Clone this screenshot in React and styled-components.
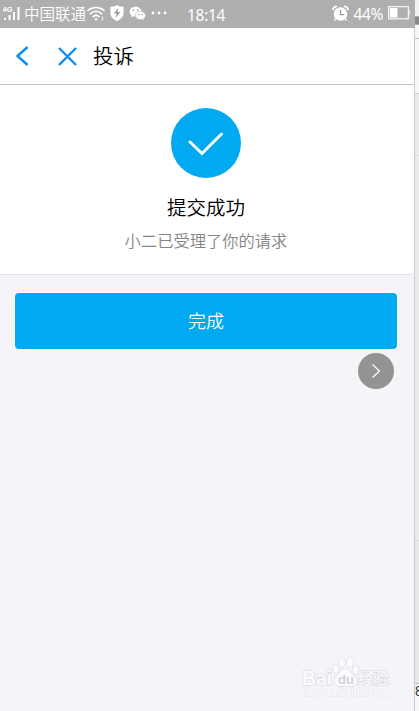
import React from 'react'
import styled, { createGlobalStyle } from 'styled-components'

const GlobalStyle = createGlobalStyle`
  * {
    box-sizing: border-box;
  }

  body {
    margin: 0;
    overflow: hidden;
    font-family: "Noto Sans CJK SC", "Noto Sans", sans-serif;
  }
`

const Window = styled.div`
  display: flex;
  width: 419px;
  height: 711px;
  overflow: hidden;
`

const Phone = styled.div`
  position: relative;
  display: flex;
  flex-direction: column;
  width: 415px;
  background: #f4f4f9;
  border-right: 1px solid #cbcbcd;
`

const StatusBar = styled.header`
  display: flex;
  align-items: center;
  flex: none;
  width: 415px;
  height: 28px;
  padding: 0 4px 2px 3px;
  background: #afafaf;
  color: #fff;

  svg {
    flex: none;
    display: block;
  }
`

const Carrier = styled.span`
  width: 62px;
  margin: 0 1px 0 3px;
  font-size: 15.5px;
  font-weight: 350;
  line-height: 26px;
  white-space: nowrap;
`

const Notices = styled.div`
  display: flex;
  align-items: center;
  gap: 4px;
`

const Clock = styled.span`
  margin-left: 20px;
  padding-top: 3px;
  font-family: "Noto Sans", sans-serif;
  font-size: 15.5px;
  line-height: 24px;
  letter-spacing: -0.3px;
`

const Battery = styled.div`
  display: flex;
  align-items: center;
  gap: 5px;
  margin-left: auto;
  font-family: "Noto Sans", sans-serif;
  font-size: 15.5px;
  line-height: 24px;
  letter-spacing: -0.4px;

  span {
    padding-top: 2px;
  }
`

const TitleBar = styled.nav`
  display: flex;
  align-items: center;
  flex: none;
  height: 57px;
  padding-left: 14px;
  background: #fff;
  border-bottom: 1px solid #c4c4c4;

  svg {
    display: block;
  }
`

const IconButton = styled.button`
  margin: 0 ${props => props.$gap}px 0 0;
  padding: 0;
  border: 0;
  background: none;
`

const Title = styled.h1`
  margin: 0;
  padding-bottom: 2px;
  color: #000;
  font-size: 20.5px;
  font-weight: 350;
  line-height: 54px;
`

const Result = styled.section`
  display: flex;
  flex-direction: column;
  align-items: center;
  flex: none;
  height: 190px;
  padding: 23px 2px 0 0;
  background: #fff;
  border-bottom: 1px solid #e6e6e9;
`

const Badge = styled.div`
  display: flex;
  align-items: center;
  justify-content: center;
  width: 70px;
  height: 70px;
  border-radius: 50%;
  background: #00a9f0;
`

const Heading = styled.h2`
  margin: 15px 0 0;
  color: #000;
  font-size: 19.5px;
  font-weight: 350;
  line-height: 28px;
`

const Message = styled.p`
  margin: 7px 0 0;
  color: #858585;
  font-size: 16.3px;
  font-weight: 350;
  line-height: 24px;
`

const DoneButton = styled.button`
  flex: none;
  height: 56px;
  margin: 18px 17px 0 15px;
  padding: 0 0 2px;
  border: 0;
  border-radius: 4px;
  box-shadow: 0 0 0 1px #fcfbfa;
  background: #00a9f0;
  color: #fff;
  font-family: inherit;
  font-size: 18px;
  font-weight: 350;
`

const Float = styled.div`
  position: absolute;
  top: 353px;
  left: 358px;
  display: flex;
  align-items: center;
  justify-content: center;
  width: 36px;
  height: 36px;
  border-radius: 50%;
  background: #939393;
`

const Watermark = styled.div`
  position: absolute;
  left: 301px;
  top: 655px;
`

const Behind = styled.aside`
  display: flex;
  flex-direction: column;
  width: 4px;
  background: #f6f6f6;
`

const Slice = styled.div`
  flex: none;
  height: ${props => props.$height}px;
  background: ${props => props.$color};
  border-bottom: 1px solid ${props => props.$line};
`

const Fragment = styled.div`
  width: 4px;
  height: 14px;
  color: #333;
  font: 14px/14px "Liberation Sans", sans-serif;
  overflow: hidden;
`

const Signal = () => (
  <svg width="18" height="18" viewBox="0 0 18 18" fill="#fff">
    <text x="-.5" y="7.5" fontSize="7.5" fontWeight="700" fontFamily="Liberation Sans, sans-serif">4G</text>
    <path d="M1 14h2v2H1zM5.500 11h2v5h-2zM10 8h2v8h-2zM14.500 3h2v13h-2z" />
  </svg>
)

const Wifi = () => (
  <svg width="18" height="17" viewBox="0 0 18 17" fill="none" stroke="#fff" strokeWidth="1.6" strokeLinecap="round">
    <path d="M1 5.500C5.500 1.500 12.500 1.500 17 5.500M3.500 8.700C7 5.600 11 5.600 14.500 8.700M6 11.600C8 10 10 10 12 11.600" />
    <circle cx="9" cy="14.300" r="1.200" fill="#fff" stroke="none" />
    <path d="M15.500 12v3" strokeWidth="1.300" opacity=".7" />
  </svg>
)

const Shield = () => (
  <svg width="16" height="18" viewBox="0 0 16 18">
    <path d="M8 1l2 1.200 4.600.6V9c0 4-3.300 6.500-6.600 8C4.700 15.500 1.400 13 1.400 9V2.800L6 2.200z" fill="#fff" />
    <path d="M9.300 4L4.800 9.600h2.800L6.800 13.800 11.300 8H8.400z" fill="#999" />
  </svg>
)

const Chats = () => (
  <svg width="17" height="15" viewBox="0 0 17 15">
    <path d="M6.500.8C3 .8.500 3 .500 5.700c0 1.600.8 2.900 2.100 3.800L2 11.500l2.400-1.200 2.200.4C10 10.700 12.500 8.500 12.500 5.700S10 .8 6.500.8z" fill="#fff" />
    <path d="M11.500 5.300c-2.800 0-5 1.800-5 4.200s2.200 4.200 5 4.200l1.700-.3 1.900 1-.5-1.600c1.200-.8 1.900-2 1.900-3.300 0-2.400-2.200-4.200-5-4.200z" fill="#fff" stroke="#afafaf" strokeWidth=".6" />
    <g fill="#999">
      <circle cx="4.600" cy="4.300" r=".8" />
      <circle cx="8.600" cy="4.300" r=".8" />
      <circle cx="9.800" cy="8.500" r=".7" />
      <circle cx="13.200" cy="8.500" r=".7" />
    </g>
  </svg>
)

const Dots = () => (
  <svg width="17" height="4" viewBox="0 0 17 4" fill="#fff">
    <circle cx="3" cy="2" r="1.400" />
    <circle cx="9" cy="2" r="1.400" />
    <circle cx="15" cy="2" r="1.400" />
  </svg>
)

const Alarm = () => (
  <svg width="17" height="17" viewBox="0 0 17 17">
    <circle cx="8.500" cy="9" r="6.800" fill="#fff" />
    <path d="M1 4.500Q1.500 2 4.300 1.400M12.700 1.400Q15.500 2 16 4.500" fill="none" stroke="#fff" strokeWidth="1.700" strokeLinecap="round" />
    <path d="M3.500 14l-1 1.500M13.500 14l1 1.500" stroke="#fff" strokeWidth="1.500" />
    <path d="M8.500 5v4.700h3.800" fill="none" stroke="#999" strokeWidth="1.300" />
  </svg>
)

const BatteryIcon = () => (
  <svg width="23" height="14" viewBox="0 0 23 14">
    <rect x=".7" y=".7" width="19.600" height="12.100" fill="none" stroke="#fff" strokeWidth="1.100" />
    <rect x="2" y="2" width="7.500" height="9.500" fill="#fff" />
    <rect x="21" y="4.500" width="1.300" height="4.500" fill="#ddd" />
  </svg>
)

const BaiduJingyan = () => (
  <svg width="95" height="46" viewBox="0 0 95 46" fill="#fbfbfd" stroke="#d9d9dd" strokeWidth="1.200">
    <g style={{ paintOrder: 'stroke' }}>
      <text x="1" y="30" fontSize="20.500" fontWeight="700" textLength="30" lengthAdjust="spacingAndGlyphs" fontFamily="Liberation Sans, sans-serif">Bai</text>
      <ellipse cx="35" cy="14" rx="2.900" ry="4" transform="rotate(-15 35 14)" />
      <ellipse cx="41" cy="7.500" rx="3" ry="4.500" />
      <ellipse cx="49" cy="7.500" rx="3" ry="4.500" transform="rotate(8 49 7.500)" />
      <ellipse cx="54.500" cy="15" rx="2.900" ry="4" transform="rotate(15 54.500 15)" />
      <path d="M44.500 13.500c-4 0-5 4-8 6.500-3 2.500-4.200 5-3 8 1.500 4 6 3 11 3s9.500 1 11-3c1.200-3-.500-5.500-3-8-3-2.500-4-6.500-8-6.500z" />
      <text x="37" y="29" fontSize="13" fontWeight="700" fill="#d2d2d7" stroke="none" fontFamily="Liberation Sans, sans-serif">du</text>
      <text x="57" y="29" fontSize="15.500" fontWeight="500" textLength="31" fontFamily="Noto Sans CJK SC, sans-serif">经验</text>
      <text x="1" y="41" fontSize="10" fontWeight="700" strokeWidth=".8" stroke="#e6e6ea" textLength="87" lengthAdjust="spacingAndGlyphs" fontFamily="Liberation Sans, sans-serif">jingyan.baidu.com</text>
    </g>
  </svg>
)

export default () => (
  <Window>
    <GlobalStyle />
    <Phone>
      <StatusBar>
        <Signal />
        <Carrier>中国联通</Carrier>
        <Notices>
          <Wifi />
          <Shield />
          <Chats />
          <Dots />
        </Notices>
        <Clock>18:14</Clock>
        <Battery>
          <Alarm />
          <span>44%</span>
          <BatteryIcon />
        </Battery>
      </StatusBar>
      <TitleBar>
        <IconButton $gap={27} aria-label="返回">
          <svg width="17" height="22" viewBox="0 0 17 22" fill="none" stroke="#0c8df2" strokeWidth="2.400">
            <path d="M13.500 2L3.500 11l10 9" />
          </svg>
        </IconButton>
        <IconButton $gap={16} aria-label="关闭">
          <svg width="19" height="19" viewBox="0 0 19 19" fill="none" stroke="#0c8df2" strokeWidth="2.400">
            <path d="M1 1l17 17M18 1L1 18" />
          </svg>
        </IconButton>
        <Title>投诉</Title>
      </TitleBar>
      <Result>
        <Badge>
          <svg width="36" height="26" viewBox="0 0 36 26" fill="none" stroke="#fff" strokeWidth="3" strokeLinecap="round">
            <path d="M2 12L14 23.500 33.500 4" />
          </svg>
        </Badge>
        <Heading>提交成功</Heading>
        <Message>小二已受理了你的请求</Message>
      </Result>
      <DoneButton>完成</DoneButton>
      <Float>
        <svg width="10" height="16" viewBox="0 0 10 16" fill="none" stroke="#fff" strokeWidth="1.200">
          <path d="M1.500 1.500L8.500 8l-7 6.500" />
        </svg>
      </Float>
      <Watermark>
        <BaiduJingyan />
      </Watermark>
    </Phone>
    <Behind>
      <Slice $height={17} $color="#f0f0f0" $line="#aaa" />
      <Slice $height={8} $color="#888" $line="#aaa" />
      <Slice $height={14} $color="#f6f6f6" $line="#bbb" />
      <Slice $height={55} $color="#f8f8f8" $line="#ccc" />
      <Slice $height={62} $color="#ebebeb" $line="#ddd" />
      <Slice $height={385} $color="#ebebeb" $line="#ddd" />
      <Slice $height={143} $color="#e8e9e9" $line="#bbb" />
      <Fragment>8</Fragment>
    </Behind>
  </Window>
)
